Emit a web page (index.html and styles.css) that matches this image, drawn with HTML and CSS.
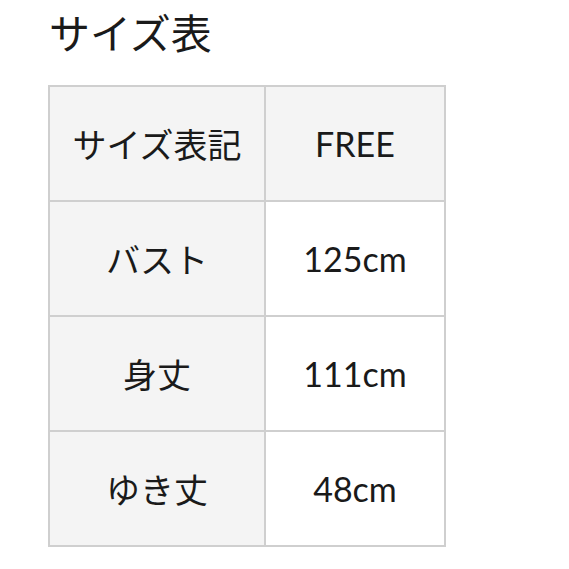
FILE: index.html
```html
<!DOCTYPE html>
<html lang="ja">
<head>
<meta charset="utf-8">
<link rel="stylesheet" href="styles.css">
</head>
<body>
<div class="page">
  <h1 class="title">サイズ表</h1>
  <table class="size-table">
    <tr class="head">
      <td class="label">サイズ表記</td>
      <td class="value">FREE</td>
    </tr>
    <tr>
      <td class="label">バスト</td>
      <td class="value">125cm</td>
    </tr>
    <tr>
      <td class="label">身丈</td>
      <td class="value">111cm</td>
    </tr>
    <tr>
      <td class="label">ゆき丈</td>
      <td class="value">48cm</td>
    </tr>
  </table>
</div>
</body>
</html>
```
FILE: styles.css
```css
html, body {
  margin: 0;
  padding: 0;
  background: #fff;
}
.page {
  padding: 4px 0 0 48px;
  font-family: Lato, "Noto Sans CJK JP", sans-serif;
  color: #1a1a1a;
}
.title {
  margin: 0 0 22px 1px;
  font-size: 41px;
  font-weight: 400;
  line-height: 59px;
}
.size-table {
  border-collapse: collapse;
  border: 2px solid #cfcfcf;
}
.size-table td {
  border: 2px solid #cfcfcf;
  height: 113px;
  padding: 0;
  text-align: center;
  vertical-align: middle;
  font-size: 34px;
}
.size-table .label {
  width: 214px;
  background: #f4f4f4;
}
.size-table .value {
  width: 178px;
  background: #fff;
}
.size-table .head .value {
  background: #f4f4f4;
}
```
